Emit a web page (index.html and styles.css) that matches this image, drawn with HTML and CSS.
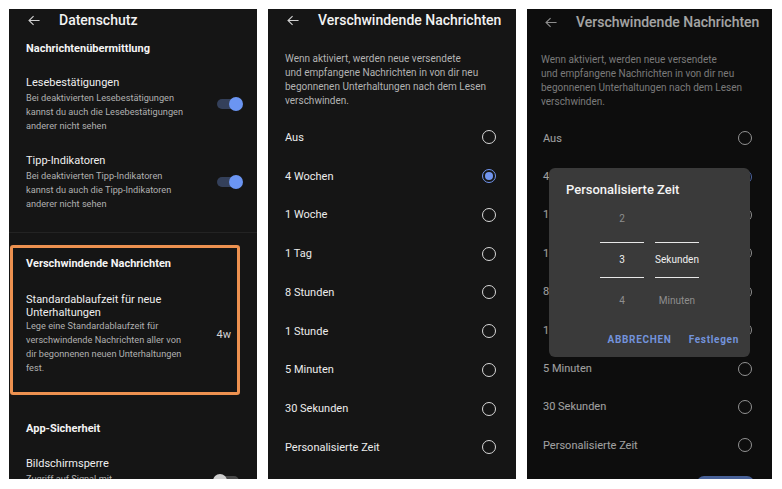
FILE: index.html
```html
<!DOCTYPE html>
<html lang="de">
<head>
    <meta charset="UTF-8">
    <meta name="viewport" content="width=device-width, initial-scale=1.0">
    <title>Signal – Verschwindende Nachrichten</title>
    <link rel="stylesheet" href="styles.css">
</head>
<body>
    <!-- Screen 1: Datenschutz -->
    <section class="phone p1">
        <header class="bar">
            <svg class="back" viewBox="0 0 14 12"><path d="M13.5 6H1.2M6.5 0.8L1.2 6l5.3 5.2"/></svg>
            <h1>Datenschutz</h1>
        </header>
        <h2 class="group">Nachrichtenübermittlung</h2>
        <div class="pref">
            <div class="pref-text">
                <div class="pref-title">Lesebestätigungen</div>
                <div class="pref-desc">Bei deaktivierten Lesebestätigungen<br>kannst du auch die Lesebestätigungen<br>anderer nicht sehen</div>
            </div>
            <span class="toggle on"></span>
        </div>
        <div class="pref">
            <div class="pref-text">
                <div class="pref-title">Tipp-Indikatoren</div>
                <div class="pref-desc">Bei deaktivierten Tipp-Indikatoren<br>kannst du auch die Tipp-Indikatoren<br>anderer nicht sehen</div>
            </div>
            <span class="toggle on"></span>
        </div>
        <hr class="sep">
        <div class="highlight">
            <h2 class="group">Verschwindende Nachrichten</h2>
            <div class="pref tight">
                <div class="pref-text">
                    <div class="pref-title">Standardablaufzeit für neue<br>Unterhaltungen</div>
                    <div class="pref-desc">Lege eine Standardablaufzeit für<br>verschwindende Nachrichten aller von<br>dir begonnenen neuen Unterhaltungen<br>fest.</div>
                </div>
                <span class="value">4w</span>
            </div>
        </div>
        <h2 class="group security">App-Sicherheit</h2>
        <div class="pref lock">
            <div class="pref-text">
                <div class="pref-title">Bildschirmsperre</div>
                <div class="pref-desc">Zugriff auf Signal mit</div>
            </div>
            <span class="toggle"></span>
        </div>
    </section>

    <!-- Screen 2: Auswahl -->
    <section class="phone p2">
        <header class="bar">
            <svg class="back" viewBox="0 0 14 12"><path d="M13.5 6H1.2M6.5 0.8L1.2 6l5.3 5.2"/></svg>
            <h1>Verschwindende Nachrichten</h1>
        </header>
        <p class="intro">Wenn aktiviert, werden neue versendete<br>und empfangene Nachrichten in von dir neu<br>begonnenen Unterhaltungen nach dem Lesen<br>verschwinden.</p>
        <ul class="options">
            <li>Aus <span class="radio"></span></li>
            <li>4 Wochen <span class="radio checked"></span></li>
            <li>1 Woche <span class="radio"></span></li>
            <li>1 Tag <span class="radio"></span></li>
            <li>8 Stunden <span class="radio"></span></li>
            <li>1 Stunde <span class="radio"></span></li>
            <li>5 Minuten <span class="radio"></span></li>
            <li>30 Sekunden <span class="radio"></span></li>
            <li>Personalisierte Zeit <span class="radio"></span></li>
        </ul>
    </section>

    <!-- Screen 3: Dialog -->
    <section class="phone p3">
        <header class="bar">
            <svg class="back" viewBox="0 0 14 12"><path d="M13.5 6H1.2M6.5 0.8L1.2 6l5.3 5.2"/></svg>
            <h1>Verschwindende Nachrichten</h1>
        </header>
        <p class="intro">Wenn aktiviert, werden neue versendete<br>und empfangene Nachrichten in von dir neu<br>begonnenen Unterhaltungen nach dem Lesen<br>verschwinden.</p>
        <ul class="options">
            <li>Aus <span class="radio"></span></li>
            <li>4 Wochen <span class="radio checked"></span></li>
            <li>1 Woche <span class="radio"></span></li>
            <li>1 Tag <span class="radio"></span></li>
            <li>8 Stunden <span class="radio"></span></li>
            <li>1 Stunde <span class="radio"></span></li>
            <li>5 Minuten <span class="radio"></span></li>
            <li>30 Sekunden <span class="radio"></span></li>
            <li>Personalisierte Zeit <span class="radio"></span></li>
        </ul>
        <span class="fab"></span>
        <div class="scrim"></div>
        <div class="dialog">
            <div class="dialog-title">Personalisierte Zeit</div>
            <div class="picker">
                <div class="wheel">
                    <span class="dim">2</span>
                    <span class="current">3</span>
                    <span class="dim">4</span>
                </div>
                <div class="wheel">
                    <span class="dim"></span>
                    <span class="current">Sekunden</span>
                    <span class="dim">Minuten</span>
                </div>
            </div>
            <div class="actions">
                <span class="btn">ABBRECHEN</span>
                <span class="btn">Festlegen</span>
            </div>
        </div>
    </section>
</body>
</html>
```

FILE: styles.css
```css
body {
    margin: 0;
    padding: 9px 0 0 9px;
    background: #fff;
    font-family: Roboto, "Noto Sans", sans-serif;
    display: flex;
    align-items: flex-start;
    gap: 11px;
    color: #ececec;
}
.phone {
    position: relative;
    background: #151515;
    height: 470px;
    overflow: hidden;
    flex-shrink: 0;
}
.p1 { width: 248px; }
.p2 { width: 248px; }
.p3 { width: 245px; background: #141414; }

.bar {
    height: 22px;
    display: flex;
    align-items: center;
    padding-left: 19px;
    white-space: nowrap;
}
.back {
    width: 12px;
    height: 11px;
    fill: none;
    stroke: #d0d0d0;
    stroke-width: 1.3;
    margin-right: 19px;
    flex-shrink: 0;
}
.bar h1 {
    margin: 0;
    font-size: 14px;
    font-weight: 500;
    color: #f2f2f2;
}

/* screen 1 */
.group {
    margin: 11px 0 0;
    padding-left: 17px;
    font-size: 11px;
    line-height: 14px;
    font-weight: 700;
    color: #f4f4f4;
}
.pref {
    display: flex;
    align-items: center;
    justify-content: space-between;
    padding: 0 18px 0 17px;
    margin-top: 19px;
}
.pref + .pref { margin-top: 20px; }
.pref-title {
    font-size: 11px;
    line-height: 16px;
    color: #efefef;
}
.pref-desc {
    font-size: 9.2px;
    line-height: 14px;
    color: #b0b0b0;
}
.toggle {
    position: relative;
    width: 22px;
    height: 10px;
    border-radius: 5px;
    background: #4a4a4a;
}
.toggle::after {
    content: "";
    position: absolute;
    top: -2px;
    left: -4px;
    width: 14px;
    height: 14px;
    border-radius: 50%;
    background: #cfcfcf;
}
.toggle.on { background: #34405a; }
.toggle.on::after {
    left: auto;
    right: -4px;
    background: #6b95f2;
}
.sep {
    margin: 21px 0 0;
    border: 0;
    border-top: 1px solid #232323;
}
.highlight {
    margin: 12px 0 0 1px;
    width: 230px;
    height: 150px;
    box-sizing: border-box;
    border: 3px solid #ec9150;
    border-radius: 3px;
    padding-top: 9px;
}
.highlight .group {
    margin-top: 0;
    padding-left: 13px;
}
.pref.tight {
    margin-top: 22px;
    padding: 0 6px 0 13px;
}
.tight .pref-title { line-height: 13px; }
.value {
    font-size: 11px;
    color: #d6d6d6;
}
.group.security { margin-top: 27px; }
.pref.lock { margin-top: 20px; }
.lock .toggle {
    align-self: flex-start;
    margin-top: 20px;
}

/* screen 2 + 3 */
.intro {
    margin: 21px 0 0;
    padding-left: 17px;
    font-size: 10px;
    line-height: 14px;
    color: #b3b3b3;
}
.options {
    list-style: none;
    margin: 10px 0 0;
    padding: 0;
}
.options li {
    height: 38.75px;
    display: flex;
    align-items: center;
    justify-content: space-between;
    padding: 0 20px 0 17px;
    font-size: 11px;
    color: #ececec;
}
.radio {
    width: 14px;
    height: 14px;
    box-sizing: border-box;
    border: 1.5px solid #d8d8d8;
    border-radius: 50%;
    position: relative;
}
.radio.checked { border-color: #7195f0; }
.radio.checked::after {
    content: "";
    position: absolute;
    inset: 2px;
    border-radius: 50%;
    background: #7195f0;
}

.p3 .bar { padding-left: 18px; height: 26px; }
.p3 .intro { padding-left: 14px; margin-top: 18px; }
.p3 .options { margin-top: 10px; }
.p3 .options li { height: 38.4px; padding-left: 16px; }
.fab {
    position: absolute;
    left: 170px;
    top: 467px;
    width: 57px;
    height: 14px;
    border-radius: 7px;
    background: #6b8fe0;
}
.scrim {
    position: absolute;
    inset: 0;
    background: rgba(0, 0, 0, 0.32);
}
.dialog {
    position: absolute;
    left: 22px;
    top: 159px;
    width: 201px;
    height: 189px;
    box-sizing: border-box;
    background: #3a3a3a;
    border-radius: 6px;
    padding: 14px 0 0 17px;
}
.dialog-title {
    font-size: 13px;
    line-height: 16px;
    font-weight: 500;
    color: #f4f4f4;
}
.picker {
    display: flex;
    gap: 11px;
    margin: 14px 0 0 34px;
}
.wheel {
    width: 44px;
    display: flex;
    flex-direction: column;
    align-items: center;
    font-size: 10px;
}
.wheel span {
    height: 14px;
    line-height: 14px;
}
.wheel .dim { color: #8e8e8e; }
.wheel .current {
    width: 100%;
    text-align: center;
    color: #f0f0f0;
    border-top: 1.5px solid #e8e8e8;
    border-bottom: 1.5px solid #e8e8e8;
    height: 34px;
    line-height: 34px;
    margin: 16px 0;
}
.actions {
    display: flex;
    justify-content: flex-end;
    gap: 17px;
    padding-right: 11px;
    margin-top: 26px;
}
.btn {
    font-size: 10px;
    line-height: 12px;
    font-weight: 700;
    letter-spacing: 0.7px;
    color: #7393dc;
}
```
